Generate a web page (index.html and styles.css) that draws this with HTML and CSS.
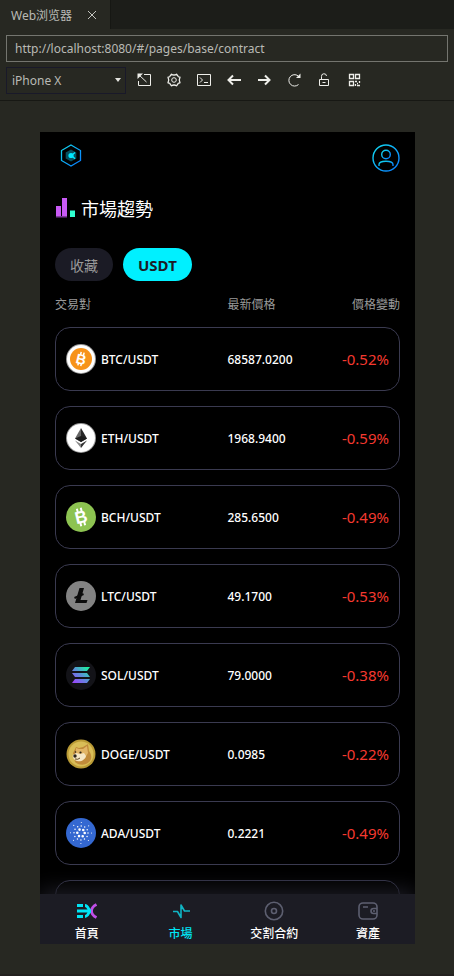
FILE: index.html
```html
<!DOCTYPE html>
<html lang="zh-Hant">
<head>
    <meta charset="UTF-8">
    <meta name="viewport" content="width=device-width, initial-scale=1.0">
    <title>市場趨勢</title>
    <link rel="stylesheet" href="styles.css">
</head>
<body>
    <!-- Browser panel -->
    <div class="tabs" lang="zh-Hans">
        <div class="tab">
            <span>Web浏览器</span>
            <button class="tab-close" aria-label="关闭">
                <svg width="10" height="10" viewBox="0 0 10 10"><path d="M1 1l8 8M9 1l-8 8"/></svg>
            </button>
        </div>
    </div>
    <div class="chrome">
        <input class="url" type="text" aria-label="URL" value="http://localhost:8080/#/pages/base/contract">
        <div class="tools">
            <div class="device">
                <select aria-label="Device">
                    <option>iPhone X</option>
                </select>
            </div>
            <button class="tool" aria-label="Open">
                <svg viewBox="0 0 16 16"><path d="M8 2.500h6.500v11h-12V9M2.500 2.500l8 7.500"/><path d="M1.500 1.500H7L1.500 7z" fill="#eeeeea" stroke="none"/></svg>
            </button>
            <button class="tool" aria-label="Settings">
                <svg viewBox="0 0 16 16"><path stroke-linejoin="round" stroke-width="1.300" d="M5.500 2.200Q8 3.800 10.500 2.200L12 4.200Q12 5 14 5.200Q12.500 8 14 10.800Q12 11 12 11.800L10.500 13.800Q8 12.200 5.500 13.800L4 11.800Q4 11 2 10.800Q3.500 8 2 5.200Q4 5 4 4.200z"/><circle cx="8" cy="8" r="2.300"/></svg>
            </button>
            <button class="tool" aria-label="Console">
                <svg viewBox="0 0 16 16"><path d="M1.500 2.500h13v11h-13zM4 5.500L6.500 8 4 10.500M8 10.500h4"/></svg>
            </button>
            <button class="tool thick" aria-label="Back">
                <svg viewBox="0 0 16 16"><path d="M15 8H3M7 3.500L2.500 8 7 12.500"/></svg>
            </button>
            <button class="tool thick" aria-label="Forward">
                <svg viewBox="0 0 16 16"><path d="M2 8h11M9 3.500L13.500 8 9 12.500"/></svg>
            </button>
            <button class="tool" aria-label="Reload">
                <svg viewBox="0 0 16 16"><path d="M12.500 12.500A5.700 5.700 0 1 1 12 3.800l1 1"/><path d="M14.500 1.500V6H10z" fill="#eeeeea" stroke="none"/></svg>
            </button>
            <button class="tool" aria-label="Lock">
                <svg viewBox="0 0 16 16"><path d="M3.500 7.500h9v6h-9zM5.500 7V4.500a2.500 2.500 0 0 1 5-.5M6.500 10.500h3"/></svg>
            </button>
            <button class="tool" aria-label="QR">
                <svg viewBox="0 0 16 16"><path stroke-width="1.300" d="M3.500 2.500h4v4h-4zM9.500 2.500h4v4h-4zM3.500 9.500h4v4h-4zM9 9.500h2M13.500 9v2M9.500 12v2M12 11.500h-1M11 13.500h3"/></svg>
            </button>
        </div>
    </div>

    <!-- Device preview -->
    <div class="stage">
        <div class="phone">
            <main class="page">
                <header class="page-header">
                    <svg width="32" height="24" viewBox="0 0 32 24" fill="none">
                        <defs>
                            <linearGradient id="blue" x1="0" y1="0" x2="1" y2="1">
                                <stop offset="0" stop-color="#12dcee"/>
                                <stop offset="1" stop-color="#0878ff"/>
                            </linearGradient>
                        </defs>
                        <path d="M16 1l9.500 5.500v10L16 22l-9.500-5.500v-10z" stroke="url(#blue)" stroke-width="1.300"/>
                        <path d="M16 5.500l5.300 3v6l-5.300 3-5.300-3v-6z" fill="#07505f"/>
                        <circle cx="16" cy="11.500" r="2.600" fill="#00e8ff"/>
                        <path d="M16.500 11.500l3.500-3M16.500 11.500l3.500 3.300" stroke="#00e8ff" stroke-width="1.400"/>
                    </svg>
                    <button class="avatar" aria-label="我的">
                        <svg width="28" height="28" viewBox="0 0 28 28" fill="none" stroke="url(#blue)" stroke-width="1.400">
                            <circle cx="14" cy="14" r="13"/>
                            <circle cx="14" cy="10.500" r="4.300"/>
                            <path d="M7 22v-1.500c0-2 2.500-3.300 7-3.300s7 1.300 7 3.300V22"/>
                        </svg>
                    </button>
                </header>

                <h1 class="title">
                    <svg width="21" height="22" viewBox="0 0 21 22">
                        <path fill="#c85af5" d="M1 8h5v11H1zM7 0h5v19H7z"/>
                        <path fill="#7f3a9d" d="M1 18h11v1.500H1z"/>
                        <path fill="#2fffd0" d="M15 12.500h5V19h-5z"/>
                    </svg>
                    市場趨勢
                </h1>

                <div class="chips">
                    <button class="chip">收藏</button>
                    <button class="chip active">USDT</button>
                </div>

                <table class="market">
                    <thead>
                        <tr>
                            <th>交易對</th>
                            <th>最新價格</th>
                            <th>價格變動</th>
                        </tr>
                    </thead>
                    <tbody>
                        <tr>
                            <td>
                                <svg class="coin" viewBox="0 0 30 30">
                                    <circle cx="15" cy="15" r="15" fill="#999"/>
                                    <circle cx="15" cy="15" r="14" fill="#fff"/>
                                    <circle cx="15" cy="15" r="11" fill="#f7931a"/>
                                    <g transform="rotate(14 15 15)">
                                        <text class="mark" x="15" y="20" font-size="14" fill="#fff">B</text>
                                        <path d="M13.500 8v3M16.500 8v3M13.500 19v3M16.500 19v3" stroke="#fff" stroke-width="1.500"/>
                                    </g>
                                </svg>
                                BTC/USDT
                            </td>
                            <td>68587.0200</td>
                            <td>-0.52%</td>
                        </tr>
                        <tr>
                            <td>
                                <svg class="coin" viewBox="0 0 30 30">
                                    <circle cx="15" cy="15" r="15" fill="#999"/>
                                    <circle cx="15" cy="15" r="14" fill="#fff"/>
                                    <path d="M15 5l-6 10.500 6 3.500z" fill="#666"/>
                                    <path d="M15 5l6 10.500-6 3.500z" fill="#262626"/>
                                    <path d="M9 15.500l6-2.500 6 2.500-6 3.500z" fill="#1c1c1c"/>
                                    <path d="M9 17.500l6 3.500v4z" fill="#888"/>
                                    <path d="M21 17.500L15 21v4z" fill="#333"/>
                                </svg>
                                ETH/USDT
                            </td>
                            <td>1968.9400</td>
                            <td>-0.59%</td>
                        </tr>
                        <tr>
                            <td>
                                <svg class="coin" viewBox="0 0 30 30">
                                    <circle cx="15" cy="15" r="15" fill="#8dc351"/>
                                    <g transform="rotate(-14 15 15)">
                                        <text class="mark" x="15" y="21" font-size="17" fill="#fff">B</text>
                                        <path d="M13 6v4M17 6v4M13 20v4M17 20v4" stroke="#fff" stroke-width="2"/>
                                    </g>
                                </svg>
                                BCH/USDT
                            </td>
                            <td>285.6500</td>
                            <td>-0.49%</td>
                        </tr>
                        <tr>
                            <td>
                                <svg class="coin" viewBox="0 0 30 30">
                                    <circle cx="15" cy="15" r="15" fill="#838383"/>
                                    <path d="M13.500 7h4.500l-3.500 12h7l-1 3H9z" fill="#0c0c0c"/>
                                    <path d="M8.500 17l9-4" stroke="#0c0c0c" stroke-width="2"/>
                                </svg>
                                LTC/USDT
                            </td>
                            <td>49.1700</td>
                            <td>-0.53%</td>
                        </tr>
                        <tr>
                            <td>
                                <svg class="coin" viewBox="0 0 30 30">
                                    <defs>
                                        <linearGradient id="sol" gradientUnits="userSpaceOnUse" x1="8" y1="23" x2="22" y2="7">
                                            <stop offset="0" stop-color="#9b45ff"/>
                                            <stop offset=".5" stop-color="#5b8fd8"/>
                                            <stop offset="1" stop-color="#19f5a0"/>
                                        </linearGradient>
                                    </defs>
                                    <circle cx="15" cy="15" r="15" fill="#131318"/>
                                    <path fill="url(#sol)" d="M9 7h15l-3 4H6zM6 13h15l3 4H9zM9 19h15l-3 4H6z"/>
                                </svg>
                                SOL/USDT
                            </td>
                            <td>79.0000</td>
                            <td>-0.38%</td>
                        </tr>
                        <tr>
                            <td>
                                <svg class="coin" viewBox="0 0 30 30">
                                    <circle cx="15" cy="15" r="14.500" fill="#b99a35"/>
                                    <circle cx="15" cy="15" r="12.500" fill="#d9bd57"/>
                                    <path fill="#c08a3a" d="M7 14l3-6 3 1 4-1 5-3 1 7c3 4 3 8 0 11-4 4-11 3-14 0z"/>
                                    <path fill="#e2b566" d="M10 9l3 1h4l4-3 1 7-3 5-9-3z"/>
                                    <path fill="#f5e6c4" d="M7 16l3-2 4 1 4-1 2 3c-1 4-5 6-9 5-3-1-5-4-4-6z"/>
                                    <circle cx="9" cy="17" r="1.700" fill="#2c241a"/>
                                    <circle cx="14.500" cy="13.500" r="1.100" fill="#2c241a"/>
                                    <circle cx="9.500" cy="13" r=".8" fill="#2c241a"/>
                                    <path d="M9 20q3 1 5-1" fill="none" stroke="#5c4520"/>
                                </svg>
                                DOGE/USDT
                            </td>
                            <td>0.0985</td>
                            <td>-0.22%</td>
                        </tr>
                        <tr>
                            <td>
                                <svg class="coin" viewBox="0 0 30 30">
                                    <circle cx="15" cy="15" r="15" fill="#3468d1"/>
                                    <g fill="none" stroke="#fff" stroke-linecap="round">
                                        <circle cx="15" cy="15" r="3.700" stroke-width="2.600" stroke-dasharray="0 3.875"/>
                                        <circle cx="15" cy="15" r="7" stroke-width="1.500" stroke-dasharray="0 3.665"/>
                                        <circle cx="15" cy="15" r="10.500" stroke-width="1.100" stroke-dasharray="0 8.247"/>
                                    </g>
                                </svg>
                                ADA/USDT
                            </td>
                            <td>0.2221</td>
                            <td>-0.49%</td>
                        </tr>
                        <tr><td></td><td></td><td></td></tr>
                    </tbody>
                </table>
            </main>

            <nav class="tabbar">
                <a href="#home">
                    <svg viewBox="0 0 24 20" fill="none" stroke-width="2.800">
                        <path stroke="#c04fe8" d="M21.500 3.500c-3 1.500-5 4-5 6.500s2 5 5 6.500"/>
                        <path stroke="#00e5f5" d="M2 4.500h6M2 10h13M2 15.500h6M10 4.500c3.500 0 3.500 5.500 6 5.500-2.500 0-2.500 5.500-6 5.500"/>
                    </svg>
                    首頁
                </a>
                <a class="active" href="#market">
                    <svg viewBox="0 0 24 20" fill="none" stroke="#10b5c4" stroke-width="1.600" stroke-linejoin="round">
                        <path d="M4 10.500h4.500L12 16.500V4l3.500 6H21"/>
                    </svg>
                    市場
                </a>
                <a href="#contract">
                    <svg viewBox="0 0 24 20" fill="none" stroke="#5d5f70" stroke-width="1.600">
                        <circle cx="12" cy="10" r="8.700"/>
                        <circle cx="12" cy="10" r="2.500"/>
                    </svg>
                    交割合約
                </a>
                <a href="#assets">
                    <svg viewBox="0 0 24 20" fill="none" stroke="#5d5f70" stroke-width="1.600">
                        <rect x="3" y="2" width="18" height="16" rx="4"/>
                        <path d="M7 6h5M21 7.500h-3.500a2.500 2.500 0 0 0 0 5H21M17 10h2"/>
                    </svg>
                    資產
                </a>
            </nav>
        </div>
    </div>
</body>
</html>
```

FILE: styles.css
```css
* {
    box-sizing: border-box;
}
body {
    margin: 0;
    height: 100vh;
    display: flex;
    flex-direction: column;
    background: #272822;
    border-bottom: 2px solid #23211f;
    font-family: "Noto Sans", "Noto Sans CJK TC", sans-serif;
    font-size: 12px;
}
button {
    margin: 0;
    padding: 0;
    border: none;
    background: none;
    font: inherit;
    color: inherit;
    cursor: pointer;
}
svg {
    display: block;
    flex: none;
}

/* browser panel */
.tabs {
    display: flex;
    height: 29px;
    background: #1c1d19;
    font-family: "Noto Sans", "Noto Sans CJK SC", sans-serif;
    color: #b9bab5;
}
.tab {
    display: flex;
    align-items: center;
    gap: 15px;
    padding: 0 13px 0 11px;
    background: #272822;
    border-right: 1px solid #161713;
}
.tab-close svg {
    fill: none;
    stroke: #c4c5c0;
}
.chrome {
    padding: 6px;
    border-bottom: 1px solid #171814;
}
.url {
    display: block;
    width: 100%;
    height: 27px;
    padding: 0 8px;
    border: 1px solid #74756f;
    background: transparent;
    color: #b9bab5;
    font: 12px "Noto Sans", sans-serif;
    outline: none;
}
.tools {
    display: flex;
    align-items: center;
    margin-top: 5px;
}
.device {
    position: relative;
    width: 120px;
    margin-right: 3px;
}
.device::after {
    content: "";
    position: absolute;
    right: 5px;
    top: 11px;
    border: 3px solid transparent;
    border-top: 4px solid #e4e4e0;
    pointer-events: none;
}
.device select {
    display: block;
    width: 100%;
    height: 27px;
    padding: 0 5px;
    border: 1px solid #191929;
    border-radius: 0;
    background: transparent;
    color: #b9bab5;
    font: 12px "Noto Sans", sans-serif;
    appearance: none;
}
.tool {
    width: 30px;
    display: flex;
    justify-content: center;
    padding-bottom: 2px;
}
.tool svg {
    width: 16px;
    height: 16px;
    fill: none;
    stroke: #eeeeea;
}
.tool.thick svg {
    stroke-width: 2;
}

/* device preview */
.stage {
    flex: 1;
    min-height: 0;
    padding: 31px 39px 30px 40px;
}
.phone {
    height: 100%;
    display: flex;
    flex-direction: column;
    background: #000;
    overflow: hidden;
    color: #fff;
}
.page {
    flex: 1;
    min-height: 0;
    padding: 12px 15px 0;
    overflow-y: auto;
    scrollbar-width: none;
}
.page-header {
    display: flex;
    justify-content: space-between;
    align-items: flex-start;
}
.title {
    display: flex;
    align-items: center;
    gap: 5px;
    margin: 24px 0 26px;
    font-size: 18px;
    font-weight: 400;
    line-height: 26px;
}
.chips {
    display: flex;
    gap: 10px;
}
.chip {
    height: 33px;
    padding: 0 15px;
    border-radius: 17px;
    background: #1b1b25;
    color: #999;
    font-size: 14px;
}
.chip.active {
    background: #00f0ff;
    color: #1c1c26;
    font-size: 15px;
    font-weight: 700;
}

/* market list */
.market,
.market thead,
.market tbody {
    display: block;
}
.market tr {
    display: flex;
    align-items: center;
}
.market th,
.market td {
    flex: 1;
    padding: 0;
    text-align: left;
}
.market th:first-child,
.market td:first-child {
    flex: 2;
}
.market th:last-child,
.market td:last-child {
    text-align: right;
}
.market thead tr {
    margin: 16px 0 14px;
    line-height: 16px;
    color: #999;
}
.market th {
    font-weight: 400;
}
.market tbody tr {
    height: 64px;
    margin-bottom: 15px;
    padding: 0 10px;
    border: 1px solid #3a3a50;
    border-radius: 15px;
}
.market td {
    font-weight: 500;
}
.market td:first-child {
    display: flex;
    align-items: center;
    gap: 5px;
}
.market td:last-child {
    font-size: 15px;
    font-weight: 400;
    color: #f5392f;
}
.coin {
    width: 30px;
    height: 30px;
}
.mark {
    font-family: "Liberation Sans", sans-serif;
    font-weight: 700;
    text-anchor: middle;
}

/* bottom navigation */
.tabbar {
    position: relative;
    display: flex;
    height: 50px;
    background: #1c1c24;
    box-shadow: 0 -5px 20px #1c1c24;
}
.tabbar a {
    flex: 1;
    display: flex;
    flex-direction: column;
    align-items: center;
    padding-top: 7px;
    gap: 5px;
    font-weight: 500;
    line-height: 16px;
    color: #fff;
    text-decoration: none;
}
.tabbar a.active {
    color: #00e5f5;
}
.tabbar svg {
    width: 24px;
    height: 20px;
}
```
